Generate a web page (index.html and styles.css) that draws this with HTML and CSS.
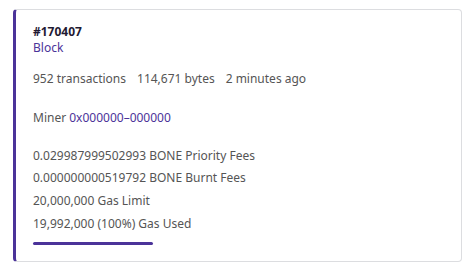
FILE: index.html
```html
<!DOCTYPE html>
<html>
<head>
<meta charset="utf-8">
<link rel="stylesheet" href="styles.css">
</head>
<body>
<div class="card">
  <div class="head">
    <div class="num">#170407</div>
    <div class="kind">Block</div>
  </div>
  <div class="meta">
    <span>952 transactions</span>
    <span>114,671 bytes</span>
    <span>2 minutes ago</span>
  </div>
  <div class="miner">Miner <span class="link">0x000000–000000</span></div>
  <div class="stats">
    <div class="row">0.029987999502993 BONE Priority Fees</div>
    <div class="row">0.000000000519792 BONE Burnt Fees</div>
    <div class="row">20,000,000 Gas Limit</div>
    <div class="row">19,992,000 (100%) Gas Used</div>
  </div>
  <div class="bar"><div class="fill" style="width:100%"></div></div>
</div>
</body>
</html>
```
FILE: styles.css
```css
html, body { margin: 0; padding: 0; background: #fff; }
body {
  padding: 9px 8px 8px 13px;
  font-family: "Noto Sans", "DejaVu Sans", sans-serif;
  font-size: 12px;
  color: #555555;
}
.card {
  box-sizing: border-box;
  width: 449px;
  height: 253px;
  border: 1px solid #dcdde0;
  border-left: 3px solid #4b3399;
  border-radius: 4px;
  padding: 14px 16px 0 17px;
  display: flex;
  flex-direction: column;
}
.num { font-weight: 700; color: #1f1a33; line-height: 16px; }
.kind { color: #4b3399; line-height: 15px; }
.meta { display: flex; gap: 11px; margin-top: 15.5px; line-height: 16px; }
.miner { margin-top: 23px; line-height: 16px; }
.link { color: #4b3399; }
.stats { margin-top: 19px; }
.row { line-height: 22.7px; }
.bar { width: 120px; height: 3px; margin-top: 6.5px; }
.fill { height: 100%; background: #4b3399; border-radius: 2px; }
```
